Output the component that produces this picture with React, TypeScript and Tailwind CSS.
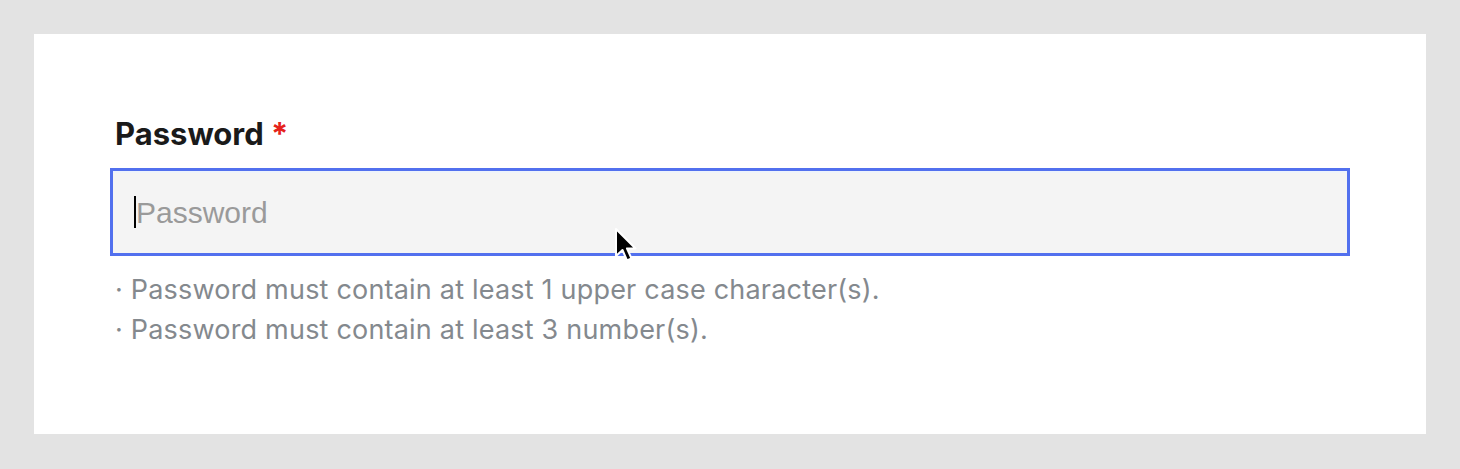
import React from "react";

export default function App() {
  return (
    <div className="relative min-h-[469px] bg-[#e3e3e3] p-[34px]">
      <div className="h-[400px] bg-white pl-[76px] pr-[76px] pt-[80px]">
        <div
          className="pl-[5px] text-[31px] font-bold leading-[40px] text-[#1a1a1a]"
          style={{ fontFamily: "Inter, sans-serif" }}
        >
          Password <span className="text-[#e5231b]">*</span>
        </div>
        <div className="mt-[14px] flex h-[88px] w-[1240px] items-center border-[3px] border-[#5270ee] bg-[#f4f4f4] pl-[21px] shadow-[inset_0_2px_0_#eef3fb]">
          <span className="h-[32px] w-[2px] bg-black" />
          <span
            className="text-[30px] leading-[33px] text-[#9a9a9a]"
            style={{ fontFamily: '"Liberation Sans", Arial, sans-serif' }}
          >
            Password
          </span>
        </div>
        <div
          className="mt-[14px] pl-[5px] text-[27px] leading-[40px] tracking-[0.2px] text-[#84898e]"
          style={{ fontFamily: "Inter, sans-serif" }}
        >
          <div>· Password must contain at least 1 upper case character(s).</div>
          <div>· Password must contain at least 3 number(s).</div>
        </div>
      </div>
      <svg
        className="absolute left-[613px] top-[226px]"
        width="26"
        height="38"
        viewBox="0 0 26 38"
      >
        <path
          d="M3 3 L3 30 L9.5 24 L14 34.5 L18.5 32.5 L14 22.5 L22.5 22.5 Z"
          fill="#000"
          stroke="#fff"
          strokeWidth="2"
          strokeLinejoin="round"
        />
      </svg>
    </div>
  );
}
